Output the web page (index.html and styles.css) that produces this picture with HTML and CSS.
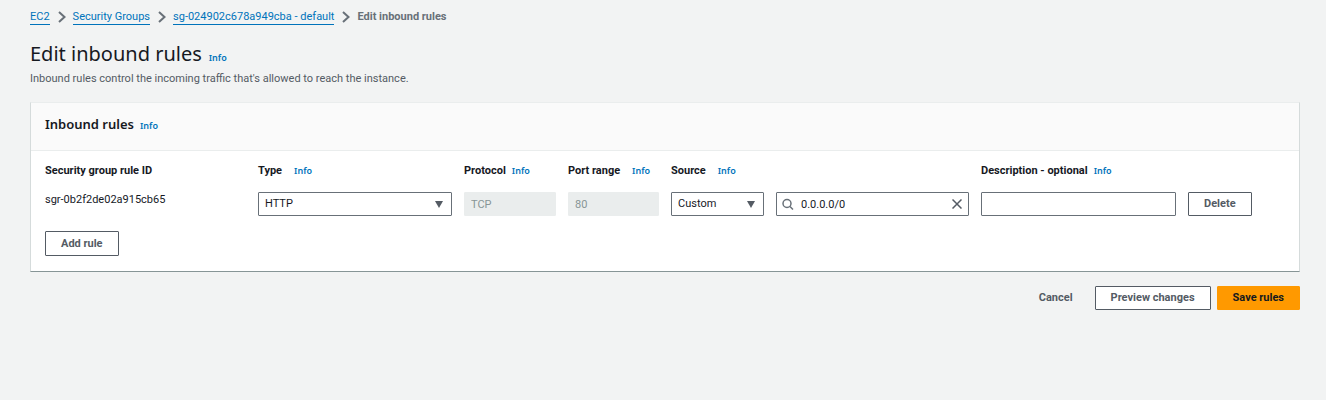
FILE: index.html
```html
<!DOCTYPE html>
<html lang="en">
<head>
<meta charset="utf-8">
<meta name="viewport" content="width=device-width, initial-scale=1">
<title>Edit inbound rules</title>
<link rel="stylesheet" href="styles.css">
</head>
<body>
<main class="page">
  <nav aria-label="Breadcrumbs">
    <ol class="crumbs">
      <li><a href="#">EC2</a></li>
      <li><svg class="chevron" viewBox="0 0 8 12" aria-hidden="true"><path d="M1 1l5.500 5L1 11"/></svg><a href="#">Security Groups</a></li>
      <li><svg class="chevron" viewBox="0 0 8 12" aria-hidden="true"><path d="M1 1l5.500 5L1 11"/></svg><a href="#">sg-024902c678a949cba - default</a></li>
      <li><svg class="chevron" viewBox="0 0 8 12" aria-hidden="true"><path d="M1 1l5.500 5L1 11"/></svg><span class="current">Edit inbound rules</span></li>
    </ol>
  </nav>
  <header class="heading">
    <h1>Edit inbound rules</h1>
    <a class="info" href="#">Info</a>
  </header>
  <p class="lead">Inbound rules control the incoming traffic that's allowed to reach the instance.</p>

  <form>
    <section class="panel">
      <header class="panel-head">
        <h2>Inbound rules</h2>
        <a class="info" href="#">Info</a>
      </header>
      <div class="panel-body">
        <div class="rules labels">
          <div class="label">Security group rule ID</div>
          <div class="label wide"><label for="type">Type</label><a class="info" href="#">Info</a></div>
          <div class="label"><label for="protocol">Protocol</label><a class="info" href="#">Info</a></div>
          <div class="label wide"><label for="port">Port range</label><a class="info" href="#">Info</a></div>
          <div class="label wide"><label for="source">Source</label><a class="info" href="#">Info</a></div>
          <div></div>
          <div class="label"><label for="description">Description - optional</label><a class="info" href="#">Info</a></div>
          <div></div>
        </div>
        <div class="rules">
          <div class="rule-id">sgr-0b2f2de02a915cb65</div>
          <div class="field">
            <select id="type"><option>HTTP</option></select>
            <svg class="arrow" viewBox="0 0 8 7" aria-hidden="true"><path d="M0 0h8L4 7z"/></svg>
          </div>
          <div class="field"><input id="protocol" type="text" value="TCP" disabled></div>
          <div class="field"><input id="port" type="text" value="80" disabled></div>
          <div class="field">
            <select id="source"><option>Custom</option></select>
            <svg class="arrow" viewBox="0 0 8 7" aria-hidden="true"><path d="M0 0h8L4 7z"/></svg>
          </div>
          <div class="field">
            <svg class="search-icon" viewBox="0 0 12 12" aria-hidden="true"><circle cx="5" cy="5.500" r="4"/><path d="M8 8.500l3 3"/></svg>
            <input class="search" type="text" value="0.0.0.0/0" aria-label="Source address">
            <button class="clear" type="button" aria-label="Clear"><svg viewBox="0 0 10 10" aria-hidden="true"><path d="M.5.5l9 9M9.500.5l-9 9"/></svg></button>
          </div>
          <div class="field"><input id="description" type="text"></div>
          <div><button class="btn" type="button">Delete</button></div>
        </div>
        <button class="btn add" type="button">Add rule</button>
      </div>
    </section>
    <div class="actions">
      <button class="btn link" type="button">Cancel</button>
      <button class="btn" type="button">Preview changes</button>
      <button class="btn primary" type="submit">Save rules</button>
    </div>
  </form>
</main>
</body>
</html>
```

FILE: styles.css
```css
* { box-sizing: border-box; }

body {
  margin: 0;
  background: #f2f3f3;
  color: #16191f;
  font: 11px/16px Roboto, "Noto Sans", sans-serif;
}

.page { padding: 9px 26px 24px 30px; }

a { color: #0073bb; text-decoration: none; }

.crumbs {
  display: flex;
  flex-wrap: wrap;
  margin: 0;
  padding: 0;
  list-style: none;
}
.crumbs li { display: flex; align-items: center; }
.crumbs a { border-bottom: 1px solid #0073bb; line-height: 14px; }
.current { color: #687078; font-weight: 700; }
.chevron {
  width: 8px;
  height: 12px;
  margin: 0 7px 0 8px;
  fill: none;
  stroke: #687078;
  stroke-width: 2;
}

.info { font-family: "Noto Sans", sans-serif; font-size: 9px; font-weight: 600; }

.heading { display: flex; align-items: baseline; gap: 7px; margin-top: 15px; }
h1 { margin: 0; font-family: "Noto Sans", sans-serif; font-size: 20px; line-height: 28px; font-weight: 400; }
.lead { margin: 3px 0 15px; color: #545b64; }

.panel {
  background: #fff;
  border: 1px solid #eaeded;
  border-right-color: #d5dbdb;
  border-left-color: #d5dbdb;
  border-bottom-color: #879596;
}
.panel-head {
  display: flex;
  align-items: baseline;
  gap: 6px;
  padding: 12px 14px 16px;
  background: #fafafa;
  border-bottom: 1px solid #eaeded;
}
h2 { margin: 0; font-family: "Noto Sans", sans-serif; font-size: 13px; line-height: 18px; font-weight: 600; }
.panel-body { padding: 12px 14px 15px; }

.rules {
  display: grid;
  grid-template-columns:
    minmax(0, 201fr) minmax(0, 194fr) minmax(0, 92fr) minmax(0, 91fr)
    minmax(0, 93fr) minmax(0, 193fr) minmax(0, 195fr) minmax(0, 97fr);
  gap: 12px;
}
.labels { margin-bottom: 13px; }
.label {
  display: flex;
  align-items: baseline;
  gap: 6px;
  font-weight: 700;
  white-space: nowrap;
}
.label.wide { gap: 12px; }

.field { position: relative; }
.field input,
.field select {
  display: block;
  width: 100%;
  height: 24px;
  padding: 0 6px;
  appearance: none;
  border: 1px solid #687078;
  border-radius: 1px;
  background: #fff;
  color: #16191f;
  font: inherit;
}
.field input:disabled { background: #eaeded; border-color: #eaeded; color: #879596; }
.field .search { padding-left: 24px; padding-right: 24px; }
.arrow {
  position: absolute;
  top: 9px;
  right: 9px;
  width: 8px;
  height: 7px;
  fill: #545b64;
  pointer-events: none;
}
.search-icon {
  position: absolute;
  top: 6px;
  left: 6px;
  width: 12px;
  height: 12px;
  fill: none;
  stroke: #687078;
  stroke-width: 1.5;
}
.clear {
  position: absolute;
  top: 7px;
  right: 7px;
  width: 10px;
  height: 10px;
  padding: 0;
  border: 0;
  background: none;
}
.clear svg { display: block; fill: none; stroke: #545b64; stroke-width: 1.5; }

.btn {
  height: 24px;
  padding: 0 15px;
  border: 1px solid #545b64;
  border-radius: 1px;
  background: #fff;
  color: #545b64;
  font: inherit;
  font-weight: 700;
  white-space: nowrap;
}
.add { display: block; height: 25px; margin-top: 15px; }
.actions { display: flex; justify-content: flex-end; gap: 6px; margin-top: 14px; }
.link { background: none; border-color: transparent; }
.primary { background: #ff9900; border-color: #ff9900; color: #16191f; }
```
